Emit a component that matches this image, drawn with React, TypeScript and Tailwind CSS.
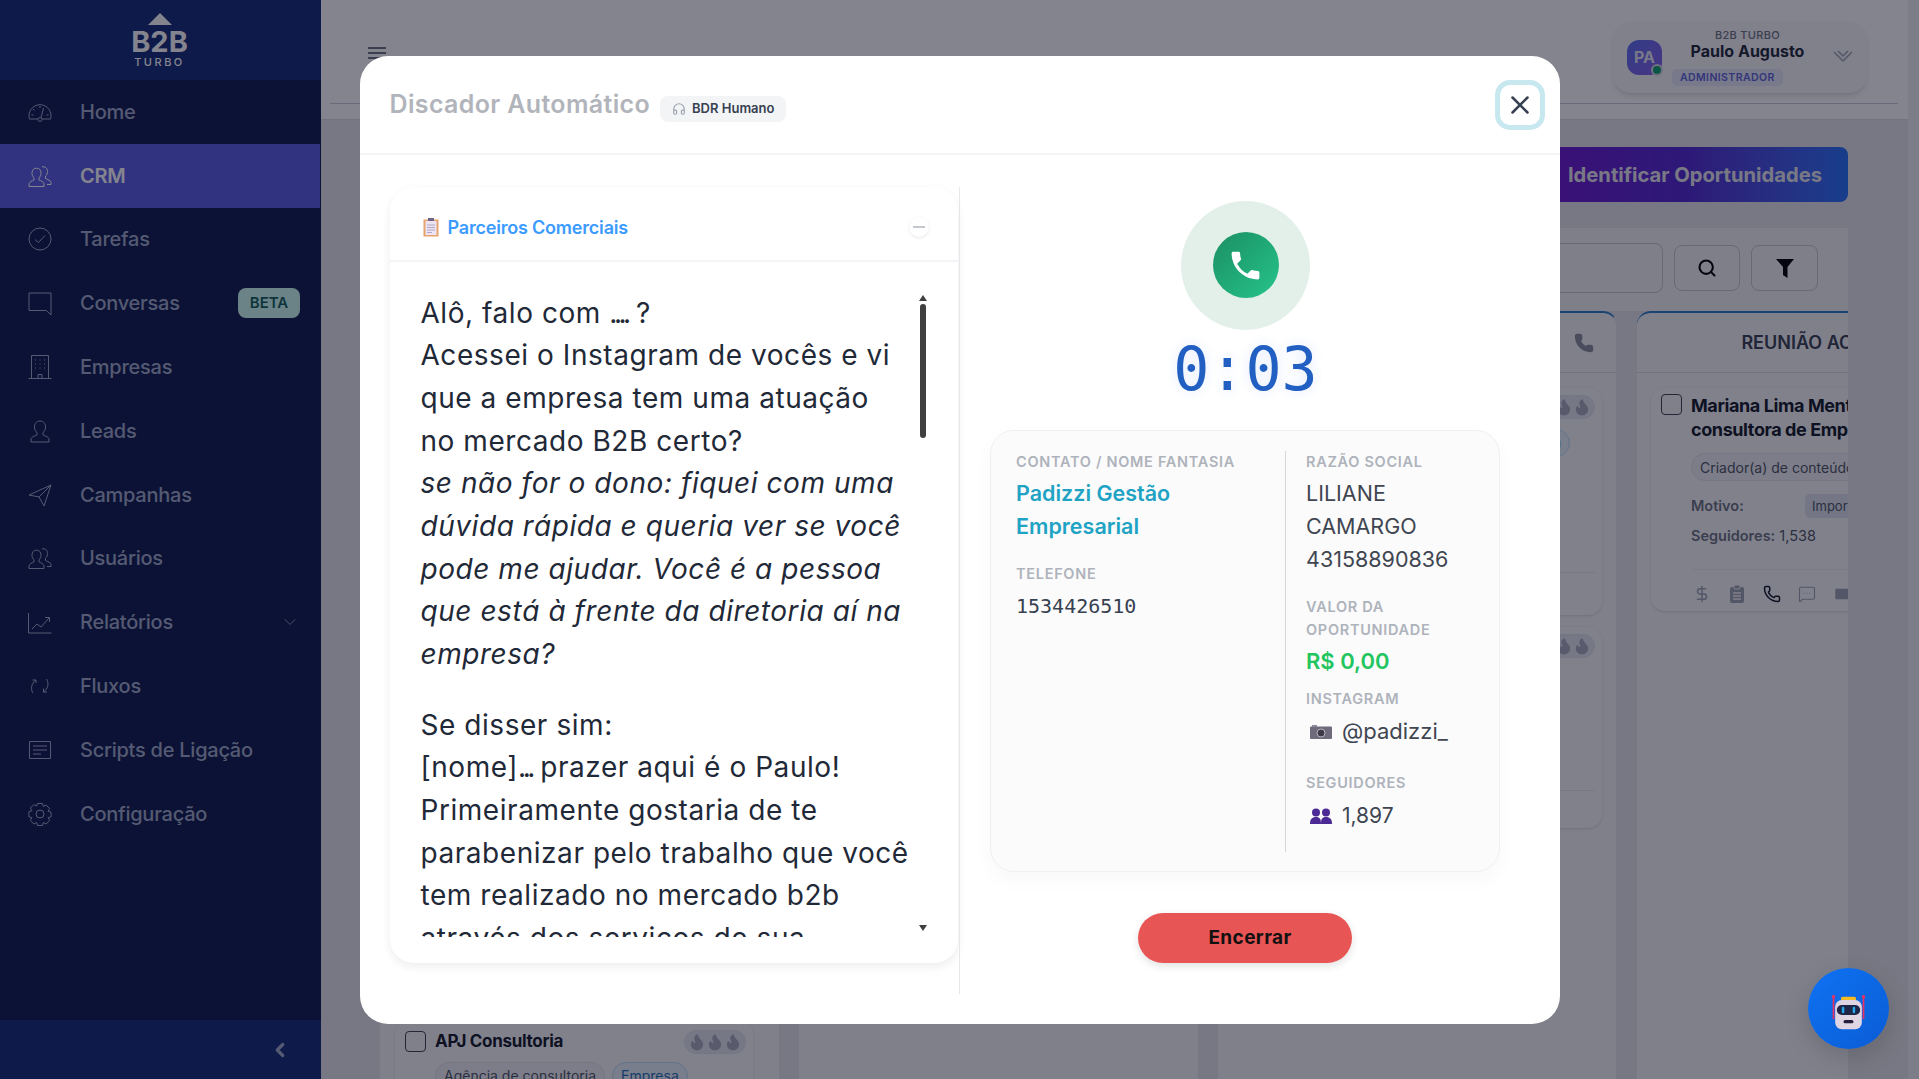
import { ChevronDown, ChevronLeft, DollarSign, Flame, Headphones, Mail, MessageSquareMore, Phone, Search, X } from "lucide-react";
import type { ReactNode } from "react";

const handset =
  "M6.62 10.79c1.44 2.83 3.76 5.14 6.59 6.59l2.2-2.2c.27-.27.67-.36 1.02-.24 1.12.37 2.33.57 3.57.57.55 0 1 .45 1 1V20c0 .55-.45 1-1 1-9.39 0-17-7.61-17-17 0-.55.45-1 1-1h3.5c.55 0 1 .45 1 1 0 1.25.2 2.45.57 3.57.11.35.03.74-.25 1.02l-2.2 2.2z";

const Line = ({ children }: { children: ReactNode }) => (
  <svg width="24" height="24" viewBox="0 0 24 24" fill="none" stroke="currentColor" strokeWidth="1" className="shrink-0">
    {children}
  </svg>
);

const TwoUsers = () => (
  <Line>
    <path d="M1 22.5v-2.6c0-1.9 3-3 5-4v-2.2c-1.4-1-2-2.5-2-4.5 0-3 1.5-5 4.5-5s4.5 2 4.5 5c0 2-.6 3.5-2 4.5v2.2c2 1 5 2.1 5 4v2.6z" />
    <path d="M14 3c2.8-.9 5.500 1 5.500 4.500 0 2-.6 3.500-2 4.500v2.500c2 1 5.500 2.100 5.500 4v2h-4" />
  </Line>
);

const navItems: { label: string; icon: ReactNode; active?: boolean; caret?: boolean }[] = [
  {
    label: "Home",
    icon: (
      <Line>
        <path d="M10 19H1.5A11 11 0 1 1 22.5 19H14" />
        <circle cx="12" cy="19.5" r="2" />
        <path d="M13 17.7 15.5 8M12 6v2M5 9l1.5 1.5M3.5 15h2M20.5 15h-2" />
      </Line>
    ),
  },
  { label: "CRM", icon: <TwoUsers />, active: true },
  {
    label: "Tarefas",
    icon: (
      <Line>
        <circle cx="12" cy="12" r="11" />
        <path d="m7 12.5 3.5 3 6.5-7" />
      </Line>
    ),
  },
  {
    label: "Conversas",
    icon: (
      <Line>
        <path d="M1 2h22v22l-4.5-4.5H1z" />
      </Line>
    ),
  },
  {
    label: "Empresas",
    icon: (
      <Line>
        <path d="M.5 23.5h23M3.5 23.5V.5h17v23M10 23.5v-4h4v4M7 5h1M11.5 5h1M16 5h1M7 9h1M11.5 9h1M16 9h1M7 13h1M11.5 13h1M16 13h1" />
      </Line>
    ),
  },
  {
    label: "Leads",
    icon: (
      <Line>
        <path d="M3 23v-3c0-2 4-3 6-4v-2.5c-1.5-1-2.5-3-2.5-5.5 0-3.5 2-6 5.5-6s5.5 2.5 5.5 6c0 2.5-1 4.5-2.5 5.5V16c2 1 6 2 6 4v3z" />
      </Line>
    ),
  },
  {
    label: "Campanhas",
    icon: (
      <Line>
        <path d="M23 2 1 12l10 2 5 9zM23 2 11 14" />
      </Line>
    ),
  },
  { label: "Usuários", icon: <TwoUsers /> },
  {
    label: "Relatórios",
    icon: (
      <Line>
        <path d="M.5 3v20h23M4 19l5-5 4 3 8-9M17 7.5h4.5V12" />
      </Line>
    ),
    caret: true,
  },
  {
    label: "Fluxos",
    icon: (
      <Line>
        <path d="M5 19C2.5 15.5 3 9.5 8 6H4.5M8 6v3M18.5 5c2.5 3.5 2 9.5-3 13H19M15.5 18v-3.5" />
      </Line>
    ),
  },
  {
    label: "Scripts de Ligação",
    icon: (
      <Line>
        <path d="M1.5 3.5h21v17h-21zM5 8h14M5 12h14M5 16h8" />
      </Line>
    ),
  },
  {
    label: "Configuração",
    icon: (
      <Line>
        <circle cx="12" cy="12" r="4" />
        <path d="M9.5 1.5h5l.8 3 2.8-1.5 3.5 3.5-1.5 2.8 3 .9v4.600l-3 .9 1.500 2.800-3.500 3.500-2.800-1.500-.8 3h-5l-.8-3-2.800 1.500-3.500-3.500 1.500-2.800-3-.9V9.700l3-.9L2.400 6l3.500-3.500 2.800 1.500z" />
      </Line>
    ),
  },
];

const Flames = ({ className }: { className?: string }) => (
  <div className={`flex items-center justify-center h-[24px] w-[62px] rounded-full bg-[#e5e7ef] border border-[#dfe2ea] text-[#a9adbd] ${className ?? ""}`}>
    <Flame size={18} fill="currentColor" strokeWidth={2.5} />
    <Flame size={18} fill="currentColor" strokeWidth={2.5} />
    <Flame size={18} fill="currentColor" strokeWidth={2.5} />
  </div>
);

const Checkbox = () => <div className="w-[21px] h-[21px] shrink-0 rounded-[4px] border border-[#3f4350] bg-[#f7f7f9]" />;

const Label = ({ children, className }: { children: ReactNode; className?: string }) => (
  <div className={`text-[14.5px] leading-[22px] font-semibold tracking-[0.7px] text-[#aeb3bb] whitespace-nowrap ${className ?? ""}`}>{children}</div>
);

const Dots = ({ children }: { children: string }) => <span className="tracking-[-3.5px]">{children}</span>;

const Bot = () => (
  <svg width="35" height="35" viewBox="0 0 42 42" className="mt-[8px]">
    <rect x="12" y="2" width="18" height="5" rx="2" fill="#f5b921" />
    <rect x="2" y="3" width="2" height="26" fill="#ee2f62" />
    <rect x="38" y="3" width="2" height="26" fill="#ee2f62" />
    <circle cx="3" cy="2" r="2" fill="#ee2f62" />
    <circle cx="39" cy="2" r="2" fill="#ee2f62" />
    <rect x="5" y="6" width="32" height="35" rx="8" fill="#e0d5e2" />
    <rect x="7" y="12" width="28" height="12" rx="6" fill="#1f2547" />
    <rect x="13" y="14" width="3" height="8" rx="1.5" fill="#26a8ee" />
    <rect x="26" y="14" width="3" height="8" rx="1.5" fill="#26a8ee" />
    <rect x="15" y="30" width="12" height="4" rx="2" fill="#241f3d" />
  </svg>
);

export default function App() {
  return (
    <div className="flex h-screen w-full overflow-hidden bg-[#e6e6ea] font-['Inter',sans-serif]">
      <aside className="w-[321px] shrink-0 flex flex-col bg-[#0c1a4c] text-[#a0aac8]">
        <div className="h-[80px] shrink-0 bg-[#122a76] flex flex-col items-center pt-[13px] pr-[2px] text-white">
          <svg width="24" height="12" viewBox="0 0 24 12">
            <path d="M12 0 24 12H0z" fill="currentColor" />
          </svg>
          <div className="text-[29px] leading-[28px] font-bold mt-[3px]">B2B</div>
          <div className="text-[11px] leading-[12px] tracking-[2.5px] font-medium">TURBO</div>
        </div>
        <nav className="flex-1 flex flex-col">
          {navItems.map((item) => (
            <div key={item.label} className={`h-[63.8px] flex items-center gap-7 pl-7 pr-[20px] w-[320px] ${item.active ? "bg-[#585ce2] text-white" : ""}`}>
              {item.icon}
              <span className={`text-[20px] tracking-[-0.25px] ${item.active ? "font-semibold" : "font-medium"}`}>{item.label}</span>
              {item.label === "Conversas" ? (
                <span className="ml-auto w-[62px] h-[30px] rounded-lg bg-[#ccfbf1] text-[#115e59] text-[15px] font-semibold flex items-center justify-center">BETA</span>
              ) : null}
              {item.caret ? <ChevronDown size={20} strokeWidth={1} className="ml-auto" /> : null}
            </div>
          ))}
        </nav>
        <div className="h-[59px] shrink-0 bg-[#122a76] flex items-center justify-end pr-[30px]">
          <ChevronLeft size={22} strokeWidth={3.5} />
        </div>
      </aside>

      <main className="flex-1 min-w-0 flex">
        <div className="flex-1 min-w-0 flex flex-col">
          <header className="h-[120px] shrink-0 bg-white border-b border-[#dcdce2] pl-[9px] pr-[10px]">
            <div className="h-[104px] border-b border-[#c8c8d4] flex justify-between pl-[38px] pr-[31px] pt-[21px]">
              <div className="flex flex-col gap-[3px] pt-[26px]">
                <div className="w-[18px] h-[2px] bg-[#6b7280]" />
                <div className="w-[18px] h-[2px] bg-[#6b7280]" />
                <div className="w-[18px] h-[2px] bg-[#6b7280]" />
              </div>
              <div className="w-[254px] h-[72px] rounded-[18px] bg-[#f8f8fb] shadow-md flex items-center pl-[14px] pr-[14px]">
                <div className="relative w-[35px] h-[35px] rounded-xl bg-gradient-to-br from-[#5a6ef0] to-[#8560e8] text-[#e5e7f5] font-bold text-[16px] flex items-center justify-center shrink-0">
                  PA
                  <span className="absolute -right-[1px] -bottom-[1px] w-[12px] h-[12px] rounded-full bg-[#0ea371] border-2 border-[#d8d8e0]" />
                </div>
                <div className="flex-1 flex flex-col items-center">
                  <div className="text-[11px] leading-[14px] font-medium tracking-[0.3px] text-[#6b7280]">B2B TURBO</div>
                  <div className="text-[16px] leading-[19px] font-bold text-[#1f2937]">Paulo Augusto</div>
                  <div className="mt-[8px] self-start ml-[10px] text-[10.5px] leading-[17px] px-[8px] rounded-[5px] font-semibold tracking-[0.4px] text-[#5b63d8] bg-[#e6e8f6]">ADMINISTRADOR</div>
                </div>
                <svg width="20" height="14" viewBox="0 0 20 14" fill="none" stroke="#9ca3af" strokeWidth="1.5">
                  <path d="m1 2 9 9 9-9M5 1l5 5 5-5" />
                </svg>
              </div>
            </div>
          </header>

          <div className="flex-1 min-h-0 flex flex-col pl-[45px] pr-[60px] pt-[27px]">
            <div className="flex justify-end">
              <div className="w-[320px] h-[55px] pt-[2px] rounded-lg bg-gradient-to-r from-[#7010d0] via-[#5028d0] to-[#2272f8] flex items-center justify-end pr-[26px] text-[#e9e9ef] text-[20.2px] font-bold whitespace-nowrap">
                Identificar Oportunidades
              </div>
            </div>
            <div className="mt-[26px] flex-1 min-h-0 flex flex-col overflow-hidden">
              <div className="h-[83px] shrink-0 bg-[#f4f4f7] flex items-start justify-end gap-[11px] pr-[30px] pt-[15px]">
                <div className="w-[300px] h-[50px] rounded-lg border border-[#c6c6d0]" />
                <div className="w-[66px] h-[46px] mt-[2px] rounded-lg border border-[#c6c6d0] flex items-center justify-center">
                  <Search size={20} strokeWidth={2.5} className="text-black" />
                </div>
                <div className="w-[67px] h-[46px] mt-[2px] rounded-lg border border-[#c6c6d0] flex items-center justify-center">
                  <svg width="18" height="19" viewBox="0 0 18 19">
                    <path d="M0 0h18l-6.5 8v11L7 16V8z" fill="#000" />
                  </svg>
                </div>
              </div>
              <div className="flex-1 min-h-0 flex gap-[20px] pl-[14px]">
                <section className="w-[399px] shrink-0 bg-[#f6f6f8] rounded-t-[14px] border-t-2 border-[#2b7fc9] pl-[15px] pr-[26px]">
                  <div className="h-[60px] border-b border-[#dcdce2] -ml-[15px] -mr-[26px]" />
                  <div className="h-[633px] mt-[15px]" />
                  <div className="rounded-[14px] bg-[#f9f9fb] shadow px-[10px] pt-[8px] h-[120px]">
                    <div className="flex items-center gap-[9px]">
                      <Checkbox />
                      <div className="text-[17px] font-bold text-[#111827] tracking-[-0.3px]">APJ Consultoria</div>
                      <Flames className="ml-auto -mr-[3px]" />
                    </div>
                    <div className="flex gap-[7px] pl-[30px] mt-[7px] text-[14px]">
                      <span className="h-[28px] px-[8px] rounded-full bg-[#f0f0f4] border border-[#e2e2ea] text-[#4b5563] flex items-center">Agência de consultoria</span>
                      <span className="h-[28px] px-[8px] rounded-full bg-[#e7f2fb] border border-[#bcdcf2] text-[#1f6fb2] flex items-center">Empresa</span>
                    </div>
                  </div>
                </section>
                <section className="w-[399px] shrink-0 bg-[#f6f6f8] rounded-t-[14px]" />
                <section className="w-[399px] shrink-0 bg-[#f6f6f8] rounded-t-[14px] border-t-2 border-[#2b7fc9] border-r border-r-[#e4e4ea] px-[14px]">
                  <div className="h-[60px] border-b border-[#dcdce2] -mx-[14px] flex items-center justify-end pr-[22px]">
                    <Phone size={20} fill="#8b8f9c" stroke="#8b8f9c" />
                  </div>
                  <div className="mt-[15px] h-[227px] rounded-[14px] bg-[#f9f9fb] shadow flex flex-col pt-[7px]">
                    <Flames className="self-end mr-[7px]" />
                    <span className="self-end mr-[32px] mt-[10px] h-[28px] px-[8px] rounded-full bg-[#e7f2fb] border border-[#bcdcf2] text-[13px] text-[#1f6fb2] flex items-center">Empresa</span>
                    <div className="mt-auto mb-[42px] mx-[7px] border-t border-[#e4e4ea]" />
                  </div>
                  <div className="mt-[12px] h-[201px] rounded-[14px] bg-[#f9f9fb] shadow p-[7px] flex flex-col">
                    <Flames className="self-end" />
                    <div className="mt-auto mb-[30px] border-t border-[#e4e4ea]" />
                  </div>
                </section>
                <section className="w-[399px] shrink-0 bg-[#f6f6f8] rounded-t-[14px] border-t-2 border-[#2b7fc9] px-[14px]">
                  <div className="h-[60px] border-b border-[#dcdce2] -mx-[14px] flex items-center justify-center pr-[40px] text-[18px] font-semibold text-[#374151] whitespace-nowrap">
                    REUNIÃO ACEITA
                  </div>
                  <div className="mt-[15px] h-[223px] rounded-[14px] bg-[#f9f9fb] shadow pl-[10px] pt-[6px]">
                    <div className="flex gap-[9px]">
                      <Checkbox />
                      <div className="text-[18px] leading-[24px] font-bold text-[#111827] tracking-[-0.4px]">
                        <div className="whitespace-nowrap">Mariana Lima Mentora</div>
                        <div className="whitespace-nowrap">consultora de Empresas</div>
                      </div>
                    </div>
                    <div className="pl-[30px]">
                      <div className="mt-[11px] inline-flex h-[28px] items-center px-[8px] rounded-full bg-[#f0f0f4] border border-[#e2e2ea] text-[14px] text-[#4b5563] whitespace-nowrap">
                        Criador(a) de conteúdo
                      </div>
                      <div className="mt-[13px] flex items-center text-[14.5px] h-[24px]">
                        <span className="w-[114px] font-semibold text-[#6b7280]">Motivo:</span>
                        <span className="px-[7px] leading-[24px] rounded-[5px] bg-[#dfe3ec] text-[13px] text-[#4b5563]">Importante</span>
                      </div>
                      <div className="mt-[7px] text-[14.5px] text-[#4b5563]">
                        <span className="font-semibold text-[#6b7280]">Seguidores:</span> 1,538
                      </div>
                      <div className="mt-[22px] pt-[15px] border-t border-[#ececf1] flex items-center gap-[17px] pl-[2px] text-[#9ca3af]">
                        <DollarSign size={18} />
                        <svg width="18" height="18" viewBox="0 0 18 18" className="shrink-0">
                          <rect x="2" y="2" width="14" height="16" rx="2" fill="currentColor" />
                          <rect x="6" y="0" width="6" height="4" rx="1" fill="currentColor" stroke="#f9f9fb" strokeWidth="1" />
                          <path d="M5 8h8M5 11h8M5 14h8" stroke="#f9f9fb" strokeWidth="1.5" />
                        </svg>
                        <Phone size={18} className="text-[#111827]" />
                        <MessageSquareMore size={18} strokeWidth={1.5} />
                        <Mail size={18} fill="currentColor" stroke="#f9f9fb" />
                      </div>
                    </div>
                  </div>
                </section>
              </div>
            </div>
          </div>
        </div>
        <div className="w-[11px] shrink-0 bg-[#f1f1f4]" />
      </main>

      <div className="fixed inset-0 bg-[#0a0a1e]/50 flex items-center justify-center">
        <div className="w-[1200px] h-[968px] rounded-[28px] bg-white flex flex-col">
          <div className="h-[99px] shrink-0 border-b-2 border-[#f3f4f6] flex items-center pl-[30px] pr-[15px]">
            <h1 className="mt-[2px] text-[25px] font-semibold tracking-[0.35px] text-[#b1b4bb]">Discador Automático</h1>
            <div className="ml-[10px] mt-[10px] h-[26px] px-[12px] rounded-lg bg-[#f3f4f6] flex items-center gap-[6px] text-[13px] font-semibold text-[#374151]">
              <Headphones size={14} className="text-[#9ca3af]" />
              BDR Humano
            </div>
            <button className="ml-auto mt-[2px] w-[50px] h-[50px] rounded-[15px] border-[5px] border-[#c8e8f0] bg-white flex items-center justify-center text-[#374151]">
              <X size={30} strokeWidth={2} />
            </button>
          </div>

          <div className="flex-1 min-h-0 flex pl-[30px] pr-[30px] pt-[32px] pb-[30px]">
            <div className="w-[569px] shrink-0">
              <div className="w-[568px] h-[776px] rounded-[24px] bg-white shadow-[0_4px_10px_rgba(0,0,0,0.07)]">
                <div className="h-[75px] pt-[8px] border-b-2 border-[#f3f4f6] flex items-center pl-[33px] pr-[29px]">
                  <svg width="16" height="19" viewBox="0 0 16 19" className="shrink-0">
                    <rect x="0.5" y="1.5" width="15" height="17" fill="#e8a46c" />
                    <rect x="2.5" y="3" width="11" height="14" fill="#ece4f2" />
                    <rect x="5" y="0" width="6" height="3" fill="#6d6486" />
                    <path d="M4 7h8M4 9.5h8M4 12h8M4 14.5h5" stroke="#b3a6c6" strokeWidth="1" />
                  </svg>
                  <span className="ml-[9px] text-[18px] font-semibold tracking-[-0.2px] text-[#3b9bff]">Parceiros Comerciais</span>
                  <span className="ml-auto w-[20px] h-[20px] rounded-full bg-white shadow-[0_1px_3px_rgba(0,0,0,0.1)] flex items-center justify-center">
                    <span className="w-[12px] h-[1.5px] bg-[#c4c7cd]" />
                  </span>
                </div>
                <div className="h-[675px] flex pl-[31px] pr-[30px] overflow-hidden">
                  <div className="flex-1 pt-[30px] text-[28px] leading-[42.67px] tracking-[0.55px] text-[#1f2937] whitespace-nowrap">
                    <div>
                      Alô, falo com <Dots>....</Dots> ?
                    </div>
                    <div>Acessei o Instagram de vocês e vi</div>
                    <div>que a empresa tem uma atuação</div>
                    <div>no mercado B2B certo?</div>
                    <div className="italic">se não for o dono: fiquei com uma</div>
                    <div className="italic">dúvida rápida e queria ver se você</div>
                    <div className="italic">pode me ajudar. Você é a pessoa</div>
                    <div className="italic">que está à frente da diretoria aí na</div>
                    <div className="italic">empresa?</div>
                    <div className="mt-[28px]">Se disser sim:</div>
                    <div>
                      [nome]<Dots>...</Dots> prazer aqui é o Paulo!
                    </div>
                    <div>Primeiramente gostaria de te</div>
                    <div>parabenizar pelo trabalho que você</div>
                    <div>tem realizado no mercado b2b</div>
                    <div>através dos serviços de sua</div>
                  </div>
                  <div className="w-[10px] shrink-0 flex flex-col items-center pt-[33px] pb-[6px]">
                    <div className="w-0 h-0 border-x-[4px] border-x-transparent border-b-[6px] border-b-[#404040]" />
                    <div className="w-[6px] h-[134px] mt-[3px] rounded-full bg-[#404040]" />
                    <div className="w-0 h-0 mt-auto border-x-[4px] border-x-transparent border-t-[6px] border-t-[#404040]" />
                  </div>
                </div>
              </div>
            </div>

            <div className="flex-1 border-l border-[#e5e7eb] flex flex-col items-center pt-[14px]">
              <div className="ml-[2px] w-[129px] h-[129px] rounded-full bg-[#e3f0ea] flex items-center justify-center">
                <div className="w-[66px] h-[66px] rounded-full bg-gradient-to-br from-[#1b8f64] to-[#26c48c] flex items-center justify-center">
                  <svg width="37" height="37" viewBox="0 0 24 24" fill="#fff">
                    <path d={handset} />
                  </svg>
                </div>
              </div>
              <div className="ml-[2px] mt-[3px] text-[60px] leading-[72px] font-['DejaVu_Sans_Mono',monospace] text-[#215fc2] [text-shadow:0_0_12px_rgba(37,99,235,0.15)]">0:03</div>

              <div className="mt-[25px] ml-[1px] w-[510px] h-[442px] rounded-[24px] bg-[#fbfbfb] border border-[#f0f0f2] shadow-[0_8px_20px_rgba(0,0,0,0.03)] flex pt-[20px] pb-[19px] pl-[25px] pr-[20px]">
                <div className="w-[270px] shrink-0 border-r border-[#d5d7da]">
                  <Label>CONTATO / NOME FANTASIA</Label>
                  <div className="mt-[4px] text-[21.5px] leading-[33px] font-semibold text-[#1fa3c4]">
                    Padizzi Gestão
                    <br />
                    Empresarial
                  </div>
                  <Label className="mt-[20px]">TELEFONE</Label>
                  <div className="mt-[5px] text-[20px] leading-[33px] font-['DejaVu_Sans_Mono',monospace] text-[#374151]">1534426510</div>
                </div>
                <div className="pl-[20px] flex-1">
                  <Label>RAZÃO SOCIAL</Label>
                  <div className="mt-[4px] text-[21.5px] leading-[33px] text-[#3f4651]">
                    LILIANE
                    <br />
                    CAMARGO
                    <br />
                    43158890836
                  </div>
                  <Label className="mt-[19px] leading-[23px]">
                    VALOR DA
                    <br />
                    OPORTUNIDADE
                  </Label>
                  <div className="mt-[3px] text-[22px] leading-[34px] font-semibold text-[#22c55e]">R$ 0,00</div>
                  <Label className="mt-[10px]">INSTAGRAM</Label>
                  <div className="mt-[6px] h-[32px] flex items-center gap-[10px] pl-[4px] text-[22px] text-[#3f4651]">
                    <svg width="22" height="14" viewBox="0 0 22 14" className="shrink-0">
                      <rect x="0" y="1.5" width="22" height="12.5" rx="1" fill="#6f6a7c" />
                      <rect x="2" y="0" width="5" height="2" fill="#8c8897" />
                      <circle cx="11" cy="8" r="4" fill="#3d3a48" stroke="#b7b4c0" strokeWidth="1" />
                    </svg>
                    @padizzi_
                  </div>
                  <Label className="mt-[24px]">SEGUIDORES</Label>
                  <div className="mt-[6px] h-[32px] flex items-center gap-[10px] pl-[4px] text-[21px] text-[#3f4651]">
                    <svg width="22" height="16" viewBox="0 0 22 16" className="shrink-0" fill="#4b2a96">
                      <circle cx="6" cy="4.5" r="4" />
                      <circle cx="16" cy="4.5" r="4" />
                      <path d="M0 16c0-5 2-7 6-7s5 2 5 7zM11 16c0-5 1-7 5-7s6 2 6 7z" />
                    </svg>
                    1,897
                  </div>
                </div>
              </div>

              <button className="mt-[41px] ml-[1px] w-[214px] h-[50px] pl-[10px] pt-[2px] rounded-full bg-[#e85555] shadow-[0_3px_8px_rgba(0,0,0,0.12)] text-[19px] font-bold tracking-[0.4px] text-[#111111]">
                Encerrar
              </button>
            </div>
          </div>
        </div>
      </div>

      <div className="fixed right-[30px] bottom-[30px] w-[81px] h-[81px] rounded-full bg-gradient-to-br from-[#0f72f2] to-[#0a5cd5] shadow-[0_8px_24px_rgba(0,0,0,0.15)] flex items-center justify-center">
        <Bot />
      </div>
    </div>
  );
}
